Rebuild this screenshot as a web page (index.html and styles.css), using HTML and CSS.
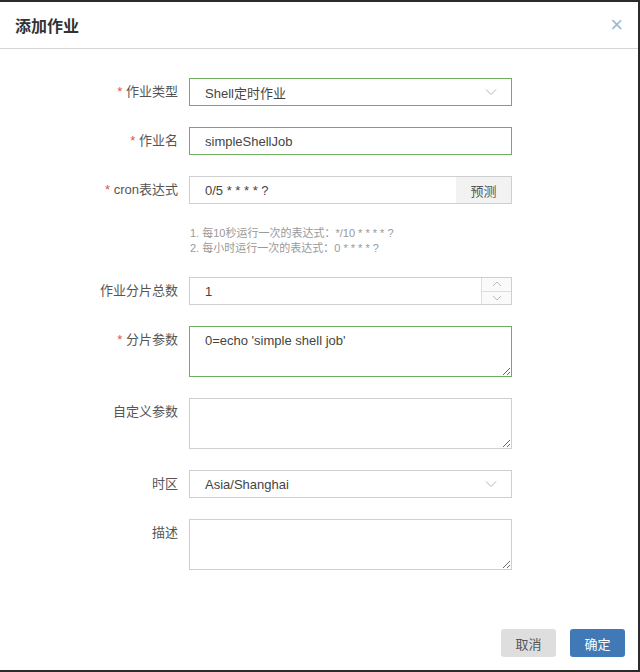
FILE: index.html
```html
<!DOCTYPE html>
<html lang="zh-CN">
<head>
  <meta charset="UTF-8" />
  <meta name="viewport" content="width=device-width, initial-scale=1.0"/>
  <title>添加作业</title>
  <link rel="stylesheet" href="styles.css">
</head>
<body>
  <div class="modal">
    <div class="modal-header">
      <h4>添加作业</h4>
      <span class="close">&times;</span>
    </div>

    <form class="modal-body">
      <label class="req">作业类型</label>
      <div class="field select ok">
        <span>Shell定时作业</span>
        <svg class="arrow" width="12" height="8" viewBox="0 0 12 8"><path d="M1 1.5l5 5 5-5" fill="none" stroke="#b5b5b5" stroke-width="1"/></svg>
      </div>

      <label class="req">作业名</label>
      <input class="field ok" type="text" value="simpleShellJob" />

      <label class="req">cron表达式</label>
      <div class="group">
        <input class="field" type="text" value="0/5 * * * * ?" />
        <button type="button" class="addon">预测</button>
      </div>

      <div></div>
      <div class="help">
        1. 每10秒运行一次的表达式：*/10 * * * * ?<br>
        2. 每小时运行一次的表达式：0 * * * * ?
      </div>

      <label>作业分片总数</label>
      <div class="field number">
        <span>1</span>
        <div class="spin">
          <div><svg width="10" height="6" viewBox="0 0 10 6"><path d="M1 5l4-4 4 4" fill="none" stroke="#bbb"/></svg></div>
          <div><svg width="10" height="6" viewBox="0 0 10 6"><path d="M1 1l4 4 4-4" fill="none" stroke="#bbb"/></svg></div>
        </div>
      </div>

      <label class="req">分片参数</label>
      <textarea class="field ok">0=echo 'simple shell job'</textarea>

      <label>自定义参数</label>
      <textarea class="field"></textarea>

      <label>时区</label>
      <div class="field select">
        <span>Asia/Shanghai</span>
        <svg class="arrow" width="12" height="8" viewBox="0 0 12 8"><path d="M1 1.5l5 5 5-5" fill="none" stroke="#b5b5b5" stroke-width="1"/></svg>
      </div>

      <label>描述</label>
      <textarea class="field"></textarea>
    </form>

    <div class="modal-footer">
      <button type="button" class="btn cancel">取消</button>
      <button type="button" class="btn ok-btn">确定</button>
    </div>
  </div>
</body>
</html>
```

FILE: styles.css
```css
html, body {
  margin: 0;
  height: 100%;
}

body {
  background: #2b2b2b;
  font-family: "Liberation Sans", "Noto Sans CJK SC", sans-serif;
  font-size: 13px;
  color: #555;
}

.modal {
  background: #fff;
  width: 638px;
  height: 668px;
  margin-top: 2px;
  display: flex;
  flex-direction: column;
}

.modal-header {
  height: 46px;
  border-bottom: 1px solid #d5d5d5;
  display: flex;
  align-items: center;
  justify-content: space-between;
  padding: 0 15px;
}

.modal-header h4 {
  margin: 0;
  font-size: 16px;
  font-weight: bold;
  color: #333;
}

.close {
  color: #9db9d2;
  font-size: 22px;
  font-weight: 300;
  line-height: 1;
}

.modal-body {
  margin: 29px 0 0 0;
  display: grid;
  grid-template-columns: 178px 323px;
  column-gap: 11px;
  row-gap: 21px;
  align-items: start;
}

label {
  text-align: right;
  padding-top: 6px;
  line-height: 16px;
  color: #555;
}

label.req::before {
  content: "* ";
  color: #d9534f;
}

.field {
  box-sizing: border-box;
  width: 100%;
  height: 28px;
  border: 1px solid #cfcfcf;
  padding: 0 15px;
  font-family: inherit;
  font-size: 13px;
  color: #444;
  background: #fff;
  outline: none;
  margin: 0;
}

.field.ok {
  border-color: #6fad60;
}

.select {
  display: flex;
  align-items: center;
  justify-content: space-between;
  padding-right: 14px;
}

.group {
  display: flex;
}

.group .field {
  flex: 1;
  width: auto;
}

.addon {
  width: 56px;
  height: 28px;
  border: 1px solid #cfcfcf;
  border-left: none;
  background: #f2f2f2;
  font-family: inherit;
  font-size: 13px;
  color: #555;
  padding: 0;
  margin-left: -1px;
}

.help {
  margin-top: 1px;
  padding-left: 1px;
  font-size: 11px;
  line-height: 15px;
  color: #999;
}

.number {
  display: flex;
  align-items: center;
  justify-content: space-between;
  padding-right: 0;
}

.spin {
  width: 29px;
  height: 26px;
  border-left: 1px solid #ddd;
  display: flex;
  flex-direction: column;
}

.spin div {
  flex: 1;
  display: flex;
  align-items: center;
  justify-content: center;
  background: #fafafa;
}

.spin div + div {
  border-top: 1px solid #ddd;
}

textarea.field {
  height: 51px;
  padding: 5px 15px;
  line-height: 18px;
  resize: vertical;
}

.modal-footer {
  margin-top: auto;
  height: 41px;
  display: flex;
  justify-content: flex-end;
  align-items: flex-start;
  gap: 14px;
  padding-right: 13px;
}

.btn {
  width: 55px;
  height: 28px;
  border: none;
  border-radius: 3px;
  font-family: inherit;
  font-size: 13px;
  padding: 0;
}

.cancel {
  background: #dedede;
  color: #555;
}

.ok-btn {
  background: #4079b5;
  color: #fff;
}
```
